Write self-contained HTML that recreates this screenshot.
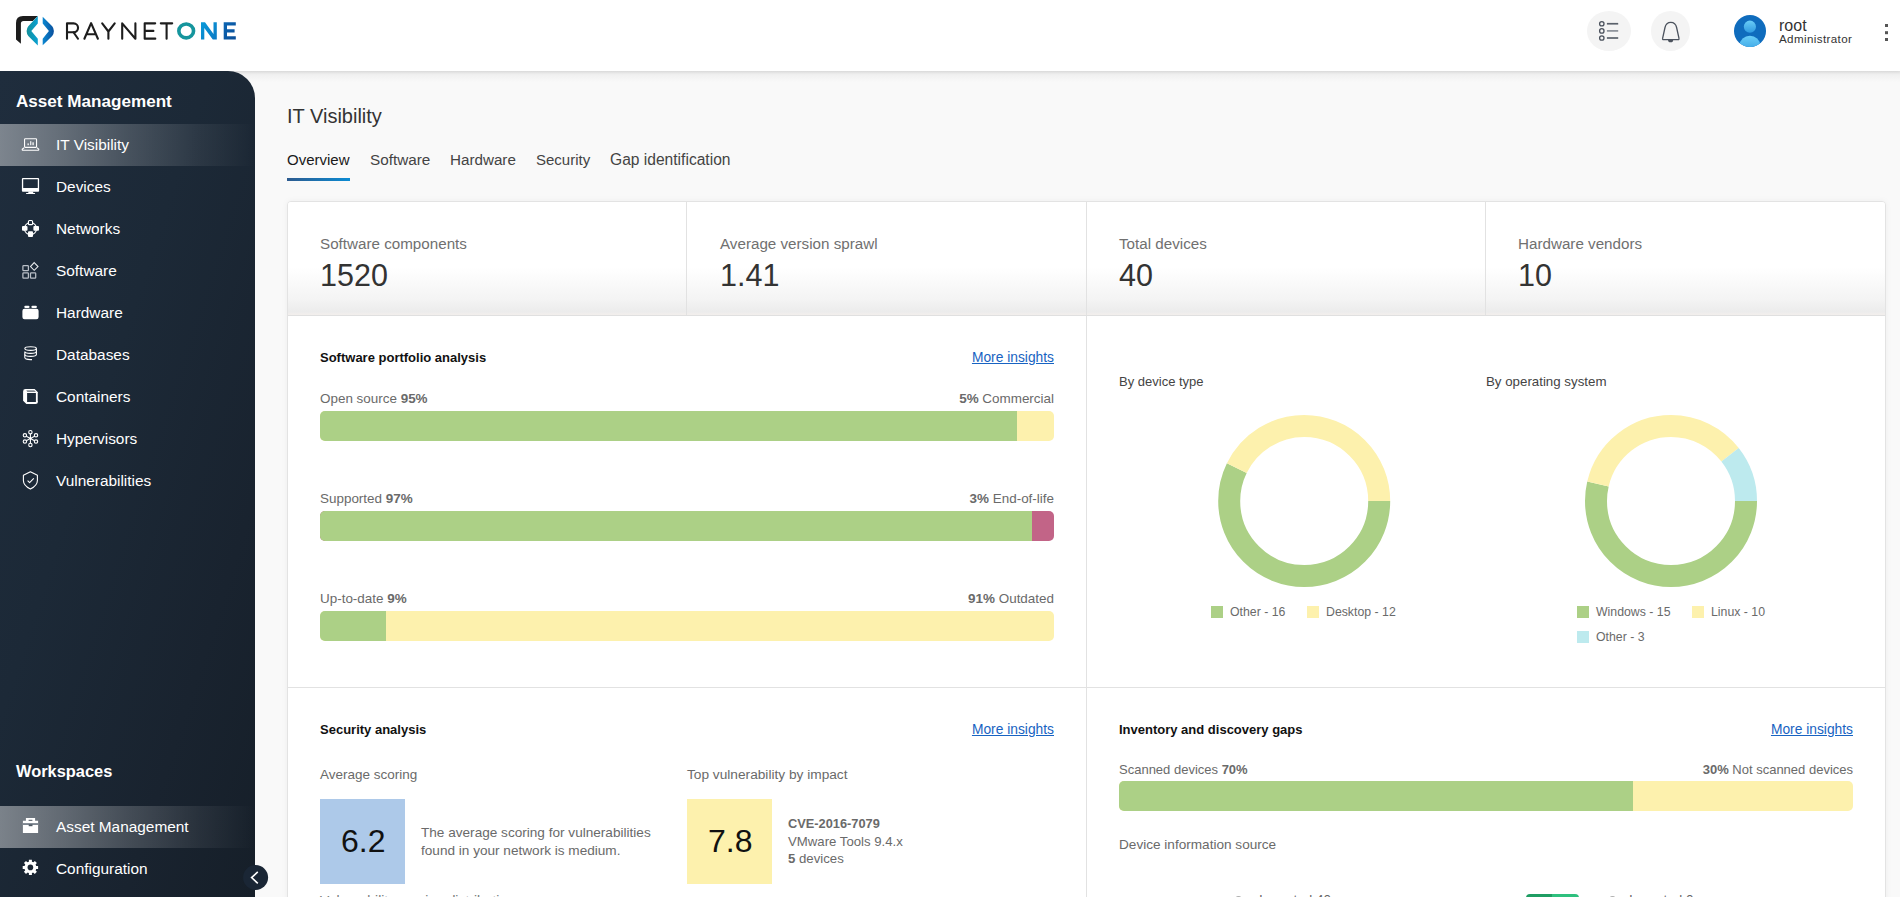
<!DOCTYPE html><html><head><meta charset="utf-8"><style>
*{box-sizing:border-box;margin:0;padding:0}
html,body{width:1900px;height:897px;overflow:hidden;background:#f9f9f9;font-family:"Liberation Sans",sans-serif;color:#333}
.a{position:absolute;white-space:nowrap}
b{font-weight:700}
</style></head><body><div class="a" style="left:0px;top:71px;width:1900px;height:11px;background:linear-gradient(#e4e4e4,#f0f0f0 35%,#f9f9f9)"></div>
<div class="a" style="left:287px;top:201px;width:1599px;height:720px;background:#fff;border:1px solid #e3e3e3;border-radius:4px;box-shadow:0 0 6px rgba(0,0,0,.05)"></div>
<div class="a" style="left:288px;top:202px;width:1597px;height:113px;background:linear-gradient(#fff 0%,#fff 58%,#f4f4f4 86%,#ececec 97%,#f3efed 100%);border-radius:3px 3px 0 0"></div>
<div class="a" style="left:288px;top:315px;width:1597px;height:1px;background:#e0e0e0"></div>
<div class="a" style="left:686px;top:202px;width:1px;height:113px;background:#e2e2e2"></div>
<div class="a" style="left:1086px;top:202px;width:1px;height:113px;background:#e2e2e2"></div>
<div class="a" style="left:1485px;top:202px;width:1px;height:113px;background:#e2e2e2"></div>
<div class="a" style="left:1086px;top:316px;width:1px;height:600px;background:#e2e2e2"></div>
<div class="a" style="left:288px;top:687px;width:1597px;height:1px;background:#e2e2e2"></div>
<div class="a " style="left:320px;top:236.13px;font-size:15.2px;line-height:15.2px;font-weight:400;color:#707070;">Software components</div>
<div class="a " style="left:320px;top:260.18px;font-size:30.5px;line-height:30.5px;font-weight:400;color:#333;">1520</div>
<div class="a " style="left:720px;top:236.13px;font-size:15.2px;line-height:15.2px;font-weight:400;color:#707070;">Average version sprawl</div>
<div class="a " style="left:720px;top:260.18px;font-size:30.5px;line-height:30.5px;font-weight:400;color:#333;">1.41</div>
<div class="a " style="left:1119px;top:236.13px;font-size:15.2px;line-height:15.2px;font-weight:400;color:#707070;">Total devices</div>
<div class="a " style="left:1119px;top:260.18px;font-size:30.5px;line-height:30.5px;font-weight:400;color:#333;">40</div>
<div class="a " style="left:1518px;top:236.13px;font-size:15.2px;line-height:15.2px;font-weight:400;color:#707070;">Hardware vendors</div>
<div class="a " style="left:1518px;top:260.18px;font-size:30.5px;line-height:30.5px;font-weight:400;color:#333;">10</div>
<div class="a " style="left:320px;top:350.70px;font-size:13px;line-height:13px;font-weight:700;color:#111;">Software portfolio analysis</div>
<div class="a" style="right:846px;top:350.92px;font-size:13.8px;line-height:13.8px;font-weight:400;color:#1863c2;text-align:right;text-decoration:underline">More insights</div>
<div class="a " style="left:320px;top:392.01px;font-size:13.45px;line-height:13.45px;font-weight:400;color:#6a6a6a;">Open source <b>95%</b></div>
<div class="a" style="right:846px;top:392.01px;font-size:13.45px;line-height:13.45px;font-weight:400;color:#6a6a6a;text-align:right;"><b>5%</b> Commercial</div>
<div class="a" style="left:320px;top:411px;width:734px;height:30px;background:#fdf1ad;border-radius:5px;overflow:hidden"></div>
<div class="a" style="left:320px;top:411px;width:697px;height:30px;background:#acd086;border-radius:5px 0 0 5px"></div>
<div class="a " style="left:320px;top:492.01px;font-size:13.45px;line-height:13.45px;font-weight:400;color:#6a6a6a;">Supported <b>97%</b></div>
<div class="a" style="right:846px;top:492.01px;font-size:13.45px;line-height:13.45px;font-weight:400;color:#6a6a6a;text-align:right;"><b>3%</b> End-of-life</div>
<div class="a" style="left:320px;top:511px;width:734px;height:30px;background:#c26487;border-radius:5px;overflow:hidden"></div>
<div class="a" style="left:320px;top:511px;width:712px;height:30px;background:#acd086;border-radius:5px 0 0 5px"></div>
<div class="a " style="left:320px;top:592.01px;font-size:13.45px;line-height:13.45px;font-weight:400;color:#6a6a6a;">Up-to-date <b>9%</b></div>
<div class="a" style="right:846px;top:592.01px;font-size:13.45px;line-height:13.45px;font-weight:400;color:#6a6a6a;text-align:right;"><b>91%</b> Outdated</div>
<div class="a" style="left:320px;top:611px;width:734px;height:30px;background:#fdf1ad;border-radius:5px;overflow:hidden"></div>
<div class="a" style="left:320px;top:611px;width:66px;height:30px;background:#acd086;border-radius:5px 0 0 5px"></div>
<div class="a " style="left:1119px;top:374.60px;font-size:13px;line-height:13px;font-weight:400;color:#444;">By device type</div>
<div class="a " style="left:1486px;top:375.14px;font-size:13.3px;line-height:13.3px;font-weight:400;color:#444;">By operating system</div>
<svg class="a" style="left:0;top:0" width="1900" height="897"><circle cx="1304.2" cy="501" r="75" fill="none" stroke="#acd086" stroke-width="22" stroke-dasharray="269.279 471.239" stroke-dashoffset="0.000"/><circle cx="1304.2" cy="501" r="75" fill="none" stroke="#fdf1ad" stroke-width="22" stroke-dasharray="201.960 471.239" stroke-dashoffset="-269.279"/><circle cx="1671" cy="501" r="75" fill="none" stroke="#acd086" stroke-width="22" stroke-dasharray="252.449 471.239" stroke-dashoffset="0.000"/><circle cx="1671" cy="501" r="75" fill="none" stroke="#fdf1ad" stroke-width="22" stroke-dasharray="168.300 471.239" stroke-dashoffset="-252.449"/><circle cx="1671" cy="501" r="75" fill="none" stroke="#bdeaee" stroke-width="22" stroke-dasharray="50.490 471.239" stroke-dashoffset="-420.749"/></svg>
<div class="a" style="left:1211px;top:606px;width:12px;height:12px;background:#acd086"></div>
<div class="a " style="left:1230px;top:606.19px;font-size:12.3px;line-height:12.3px;font-weight:400;color:#6a6a6a;">Other - 16</div>
<div class="a" style="left:1307px;top:606px;width:12px;height:12px;background:#fdf1ad"></div>
<div class="a " style="left:1326px;top:606.19px;font-size:12.3px;line-height:12.3px;font-weight:400;color:#6a6a6a;">Desktop - 12</div>
<div class="a" style="left:1577px;top:606px;width:12px;height:12px;background:#acd086"></div>
<div class="a " style="left:1596px;top:606.19px;font-size:12.3px;line-height:12.3px;font-weight:400;color:#6a6a6a;">Windows - 15</div>
<div class="a" style="left:1692px;top:606px;width:12px;height:12px;background:#fdf1ad"></div>
<div class="a " style="left:1711px;top:606.19px;font-size:12.3px;line-height:12.3px;font-weight:400;color:#6a6a6a;">Linux - 10</div>
<div class="a" style="left:1577px;top:631px;width:12px;height:12px;background:#bdeaee"></div>
<div class="a " style="left:1596px;top:631.19px;font-size:12.3px;line-height:12.3px;font-weight:400;color:#6a6a6a;">Other - 3</div>
<div class="a " style="left:320px;top:723.00px;font-size:13px;line-height:13px;font-weight:700;color:#111;">Security analysis</div>
<div class="a" style="right:846px;top:723.22px;font-size:13.8px;line-height:13.8px;font-weight:400;color:#1863c2;text-align:right;text-decoration:underline">More insights</div>
<div class="a " style="left:320px;top:767.77px;font-size:13.5px;line-height:13.5px;font-weight:400;color:#6a6a6a;">Average scoring</div>
<div class="a" style="left:320px;top:799px;width:85px;height:85px;background:#adc9e9"></div>
<div class="a " style="left:341px;top:824.91px;font-size:32px;line-height:32px;font-weight:400;color:#111;">6.2</div>
<div class="a " style="left:421px;top:826.09px;font-size:13.6px;line-height:13.6px;font-weight:400;color:#6a6a6a;">The average scoring for vulnerabilities</div>
<div class="a " style="left:421px;top:843.69px;font-size:13.6px;line-height:13.6px;font-weight:400;color:#6a6a6a;">found in your network is medium.</div>
<div class="a " style="left:687px;top:767.50px;font-size:13.7px;line-height:13.7px;font-weight:400;color:#6a6a6a;">Top vulnerability by impact</div>
<div class="a" style="left:687px;top:799px;width:85px;height:85px;background:#fdf1ad"></div>
<div class="a " style="left:708px;top:824.51px;font-size:32px;line-height:32px;font-weight:400;color:#111;">7.8</div>
<div class="a " style="left:788px;top:817.86px;font-size:12.8px;line-height:12.8px;font-weight:700;color:#6a6a6a;">CVE-2016-7079</div>
<div class="a " style="left:788px;top:834.73px;font-size:13.2px;line-height:13.2px;font-weight:400;color:#6a6a6a;">VMware Tools 9.4.x</div>
<div class="a " style="left:788px;top:851.53px;font-size:13.2px;line-height:13.2px;font-weight:400;color:#6a6a6a;"><b>5</b> devices</div>
<div class="a " style="left:320px;top:894.83px;font-size:13.9px;line-height:13.9px;font-weight:400;color:#777;">Vulnerability scoring distribution</div>
<div class="a " style="left:687px;top:895.09px;font-size:13.6px;line-height:13.6px;font-weight:400;color:#777;">Severity by CVSS score  CVSS 3.1</div>
<div class="a " style="left:1119px;top:723.00px;font-size:13px;line-height:13px;font-weight:700;color:#111;">Inventory and discovery gaps</div>
<div class="a" style="right:47px;top:723.22px;font-size:13.8px;line-height:13.8px;font-weight:400;color:#1863c2;text-align:right;text-decoration:underline">More insights</div>
<div class="a " style="left:1119px;top:762.50px;font-size:13px;line-height:13px;font-weight:400;color:#6a6a6a;">Scanned devices <b>70%</b></div>
<div class="a" style="right:47px;top:762.50px;font-size:13px;line-height:13px;font-weight:400;color:#6a6a6a;text-align:right;"><b>30%</b> Not scanned devices</div>
<div class="a" style="left:1119px;top:781px;width:734px;height:30px;background:#fdf1ad;border-radius:5px;overflow:hidden"></div>
<div class="a" style="left:1119px;top:781px;width:514px;height:30px;background:#acd086;border-radius:5px 0 0 5px"></div>
<div class="a " style="left:1119px;top:838.19px;font-size:13.6px;line-height:13.6px;font-weight:400;color:#6a6a6a;">Device information source</div>
<div class="a" style="left:1234px;top:896px;width:9px;height:9px;border-radius:50%;border:1.5px solid #999"></div>
<div class="a " style="left:1259px;top:893.37px;font-size:13.5px;line-height:13.5px;font-weight:400;color:#666;">Imported 40</div>
<div class="a" style="left:1526px;top:894px;width:53px;height:10px;border-radius:4px;background:linear-gradient(90deg,#1f9d63 0,#1f9d63 50%,#2ec07e 50%)"></div>
<div class="a" style="left:1608px;top:896px;width:9px;height:9px;border-radius:50%;border:1.5px solid #999"></div>
<div class="a " style="left:1629px;top:893.37px;font-size:13.5px;line-height:13.5px;font-weight:400;color:#666;">Imported 0</div>
<div class="a " style="left:287px;top:106.17px;font-size:20px;line-height:20px;font-weight:400;color:#333;">IT Visibility</div>
<div class="a " style="left:287px;top:152.00px;font-size:15px;line-height:15px;font-weight:400;color:#1a1a1a;">Overview</div>
<div class="a " style="left:370px;top:151.75px;font-size:15.3px;line-height:15.3px;font-weight:400;color:#444;">Software</div>
<div class="a " style="left:450px;top:151.83px;font-size:15.2px;line-height:15.2px;font-weight:400;color:#444;">Hardware</div>
<div class="a " style="left:536px;top:152.00px;font-size:15px;line-height:15px;font-weight:400;color:#444;">Security</div>
<div class="a " style="left:610px;top:152.29px;font-size:15.6px;line-height:15.6px;font-weight:400;color:#444;">Gap identification</div>
<div class="a" style="left:287px;top:178px;width:63px;height:3px;background:linear-gradient(90deg,#2d5b8f,#0b8bd3)"></div>
<div class="a" style="left:0px;top:0px;width:1900px;height:71px;background:#fff;box-shadow:0 1px 3px rgba(0,0,0,.06)"></div>
<svg class="a" style="left:0;top:0" width="260" height="60" viewBox="0 0 260 60">
<defs>
<linearGradient id="gt" x1="0" y1="0" x2="1" y2="0"><stop offset="0" stop-color="#13909a"/><stop offset="1" stop-color="#0aa0d2"/></linearGradient>
<linearGradient id="gb" x1="0" y1="0" x2="1" y2="0"><stop offset="0" stop-color="#0a88d2"/><stop offset="1" stop-color="#0a4f9c"/></linearGradient>
<linearGradient id="gn" x1="0" y1="0" x2="1" y2="1"><stop offset="0" stop-color="#0a9ad9"/><stop offset="1" stop-color="#0b79c4"/></linearGradient>
<linearGradient id="ge" x1="0" y1="0" x2="1" y2="1"><stop offset="0" stop-color="#0b63b0"/><stop offset="1" stop-color="#0a4e98"/></linearGradient>
</defs>
<path d="M16 39.5 L16 23 Q16 16 23 16 L37.8 16 L32.8 20.9 L23.5 20.9 Q20.9 20.9 20.9 23.5 L20.9 43.8 Z" fill="#1d1d1d"/>
<path d="M37.8 16 L37.8 23.4 L31.3 31.1 L37.8 38.7 L37.8 45.5 L28.3 36 Q26.6 33.6 26.6 31 Q26.6 28.4 28.3 26.3 Z" fill="url(#gt)"/>
<path d="M42.7 16.7 L52.2 26.3 Q53.9 28.4 53.9 31 Q53.9 33.6 52.2 36 L42.7 45.3 L42.7 38.7 L48.9 31.1 L42.7 23.4 Z" fill="url(#gb)"/>
<g fill="none" stroke="#1d1d1d" stroke-width="2.1" stroke-linejoin="round" stroke-linecap="round">
<path d="M67 38.75 V23.35 H73.6 A4.45 4.45 0 0 1 73.6 32.25 H67"/>
<path d="M73.5 32.25 L78 38.75"/>
<path d="M84.4 38.75 L91.1 23.2 L97.9 38.75 M86.8 34.2 H95.4"/>
<path d="M102.2 23.35 L108.4 31.5 L114.7 23.35 M108.4 31.5 V38.75"/>
<path d="M122.2 38.75 V23.35 L135.4 38.75 V23.35"/>
<path d="M155.2 23.35 H144.7 V38.65 H155.3 M144.7 30.9 H153.4"/>
<path d="M160.8 23.35 H172.2 M166.6 23.35 V38.75"/>
</g>
<ellipse cx="186.2" cy="30.9" rx="7.35" ry="6.95" fill="none" stroke="#15959d" stroke-width="3.6"/>
<path d="M201 39.6 V22.2 H205 L213.5 33.9 V22.2 H216.8 V39.6 H212.8 L204.3 27.9 V39.6 Z" fill="url(#gn)"/>
<path d="M235.8 23.85 H225.35 V37.95 H235.8 M225.35 30.9 H234.6" fill="none" stroke="url(#ge)" stroke-width="3.3"/>
</svg>
<div class="a" style="left:1587px;top:11px;width:44px;height:40px;border-radius:50%;background:#f4f4f4"></div>
<div class="a" style="left:1651px;top:11px;width:39px;height:40px;border-radius:50%;background:#f4f4f4"></div>
<svg class="a" style="left:1580px;top:0" width="320" height="60" viewBox="1580 0 320 60">
<g fill="none" stroke="#4b525d" stroke-width="1.3">
<circle cx="1601.8" cy="23.75" r="2.2"/><circle cx="1601.8" cy="30.9" r="2.2"/><circle cx="1601.8" cy="38" r="2.2"/>
</g>
<g stroke-width="1.7">
<path d="M1606.9 23.75 H1618.2" stroke="#5a616b"/>
<path d="M1606.9 30.9 H1618.2" stroke="#8b9098"/>
<path d="M1606.9 38 H1618.2" stroke="#5a616b"/>
</g>
<path d="M1662.6 38.4 Q1662.3 39.6 1663.6 39.6 H1678 Q1679.3 39.6 1679 38.4 L1676.6 27.5 Q1675.5 22.4 1670.8 22.4 Q1666.1 22.4 1665 27.5 Z" fill="none" stroke="#4b525d" stroke-width="1.3"/>
<path d="M1668 39.9 A2.6 2.4 0 0 0 1673.2 39.9 Z" fill="#4b525d"/>
<defs>
<linearGradient id="av" x1="0" y1="0" x2="0" y2="1"><stop offset="0" stop-color="#69cdf7"/><stop offset="1" stop-color="#2f9ae0"/></linearGradient>
<clipPath id="avc"><circle cx="1750" cy="31" r="16"/></clipPath>
</defs>
<circle cx="1750" cy="31" r="16" fill="#0f6cbd"/>
<g clip-path="url(#avc)">
<circle cx="1749.9" cy="26.7" r="6.1" fill="url(#av)"/>
<ellipse cx="1749.9" cy="45" rx="10.2" ry="9.3" fill="url(#av)"/>
</g>
<g fill="#555"><rect x="1885" y="24" width="3" height="3"/><rect x="1885" y="31.2" width="3" height="3"/><rect x="1885" y="38" width="3" height="3"/></g>
</svg>
<div class="a " style="left:1779px;top:17.76px;font-size:16px;line-height:16px;font-weight:400;color:#333;">root</div>
<div class="a " style="left:1779px;top:32.78px;font-size:11.6px;line-height:11.6px;font-weight:400;color:#333;letter-spacing:0.38px">Administrator</div>
<div class="a" style="left:0;top:71px;width:255px;height:826px;border-top-right-radius:27px;background:linear-gradient(108deg,#1f2d3d 0%,#1c2937 40%,#19232f 75%,#161f29 100%);overflow:hidden">
<div class="a " style="left:16px;top:21.52px;font-size:17.1px;line-height:17.1px;font-weight:700;color:#fff;">Asset Management</div>
<div class="a" style="left:0px;top:53px;width:255px;height:42px;background:linear-gradient(90deg,rgba(255,255,255,.42) 0%,rgba(255,255,255,.31) 25%,rgba(255,255,255,.19) 50%,rgba(255,255,255,.07) 78%,rgba(255,255,255,0) 100%)"></div>
<div class="a " style="left:56px;top:65.86px;font-size:15.4px;line-height:15.4px;font-weight:400;color:#fff;">IT Visibility</div>
<div class="a " style="left:56px;top:107.86px;font-size:15.4px;line-height:15.4px;font-weight:400;color:#fff;">Devices</div>
<div class="a " style="left:56px;top:149.86px;font-size:15.4px;line-height:15.4px;font-weight:400;color:#fff;">Networks</div>
<div class="a " style="left:56px;top:191.86px;font-size:15.4px;line-height:15.4px;font-weight:400;color:#fff;">Software</div>
<div class="a " style="left:56px;top:233.86px;font-size:15.4px;line-height:15.4px;font-weight:400;color:#fff;">Hardware</div>
<div class="a " style="left:56px;top:275.86px;font-size:15.4px;line-height:15.4px;font-weight:400;color:#fff;">Databases</div>
<div class="a " style="left:56px;top:317.86px;font-size:15.4px;line-height:15.4px;font-weight:400;color:#fff;">Containers</div>
<div class="a " style="left:56px;top:359.86px;font-size:15.4px;line-height:15.4px;font-weight:400;color:#fff;">Hypervisors</div>
<div class="a " style="left:56px;top:401.86px;font-size:15.4px;line-height:15.4px;font-weight:400;color:#fff;">Vulnerabilities</div>
<div class="a " style="left:16px;top:692.12px;font-size:16.4px;line-height:16.4px;font-weight:700;color:#fff;">Workspaces</div>
<div class="a" style="left:0px;top:735px;width:255px;height:42px;background:linear-gradient(90deg,rgba(255,255,255,.42) 0%,rgba(255,255,255,.31) 25%,rgba(255,255,255,.19) 50%,rgba(255,255,255,.07) 78%,rgba(255,255,255,0) 100%)"></div>
<div class="a " style="left:56px;top:747.86px;font-size:15.4px;line-height:15.4px;font-weight:400;color:#fff;">Asset Management</div>
<div class="a " style="left:56px;top:789.86px;font-size:15.4px;line-height:15.4px;font-weight:400;color:#fff;">Configuration</div>
</div>
<svg class="a" style="left:0;top:0" width="280" height="897" viewBox="0 0 280 897">
<g fill="none" stroke="#fff" stroke-width="1.1">
<!-- laptop -->
<rect x="24.55" y="138.75" width="12" height="8.6" rx="0.8"/>
<path d="M24.3 147.6 L22.3 149.2 Q21.9 150.3 23 150.3 H38 Q39.1 150.3 38.7 149.2 L36.8 147.6"/>
</g>
<g fill="#fff">
<rect x="27.4" y="143.4" width="1.6" height="1.8" opacity=".8"/><rect x="30.2" y="141.2" width="1.1" height="4"/><rect x="32.3" y="142.3" width="1.6" height="2.9" opacity=".8"/>
<!-- monitor -->
<path fill-rule="evenodd" d="M22.9 177.9 H38.1 Q39.1 177.9 39.1 178.9 V190.8 Q39.1 191.8 38.1 191.8 H22.9 Q21.9 191.8 21.9 190.8 V178.9 Q21.9 177.9 22.9 177.9 Z M23.2 179.2 V188 H37.8 V179.2 Z"/>
<rect x="28.3" y="191.5" width="4.9" height="1.6"/><rect x="26" y="193" width="9.1" height="1.1" rx=".5"/>
<!-- networks -->
</g>
<circle cx="30.5" cy="228.6" r="6.1" fill="none" stroke="#fff" stroke-width="1.1"/>
<rect x="28.45" y="220.55" width="4.1" height="4.1" rx="1" fill="#1c2a39" stroke="#fff" stroke-width="1.1"/>
<g fill="#fff"><rect x="22" y="225.9" width="5.5" height="4.9" rx="1"/><rect x="33.4" y="225.9" width="5.6" height="4.9" rx="1"/><rect x="28" y="231.2" width="5" height="5.7" rx="1"/></g>
<!-- software -->
<g fill="none" stroke="#b9bfc7" stroke-width="1.25">
<rect x="22.9" y="265.7" width="5.5" height="4.9" rx=".7"/>
<rect x="22.9" y="272.8" width="5.5" height="5.3" rx=".7"/>
<rect x="30.5" y="272.8" width="5.2" height="5.3" rx=".7"/>
</g>
<path d="M34.2 262.6 L38 266.6 L34.2 270.3 L30.5 266.6 Z" fill="none" stroke="#e6e9ec" stroke-width="1.1"/>
<!-- hardware -->
<g fill="#fff">
<rect x="22.4" y="308.8" width="16.2" height="10.5" rx="2.2"/>
<rect x="24.3" y="305.7" width="5.2" height="2.4" rx="1.1"/><rect x="31.4" y="305.7" width="5.5" height="2.4" rx="1.1"/>
</g>
<!-- database -->
<g fill="none" stroke="#fff" stroke-width="1.1">
<ellipse cx="30.6" cy="348.6" rx="5.8" ry="1.8"/>
<path d="M36.4 348.6 V354.6 Q36.4 356.4 30.6 356.4 Q24.8 356.4 24.8 354.6"/>
<path d="M36.4 351.6 Q36.4 353.4 30.6 353.4 Q24.8 353.4 24.8 351.6 V357.6 Q24.8 359.6 30.6 359.6 H32"/>
</g>
<!-- containers -->
<path fill="#fff" fill-rule="evenodd" d="M25.5 389 H34.6 L37.9 392.3 V401.5 Q37.9 404 35.4 404 H26.4 L23.1 400.7 V391.4 Q23.1 389 25.5 389 Z M27.1 393.1 V401.9 H35.9 V393.1 Z"/>
<path d="M26.3 390.3 H34.3 L35.8 391.9 H27.3 Z" fill="#1d2a39" opacity=".55"/>
<path d="M37.9 393 V401" stroke="#1d2a39" stroke-width=".6" opacity=".5"/>
<!-- hypervisors -->
<g fill="none" stroke="#fff" stroke-width="1.1">
<path d="M30.4 438.4 V433.8 M30.4 438.4 V443.5 M30.4 438.4 L26.3 436.2 M30.4 438.4 L34.6 436.2 M30.4 438.4 L26.3 440.8 M30.4 438.4 L34.6 440.8"/>
<circle cx="30.4" cy="432.2" r="1.7"/><circle cx="30.4" cy="445" r="1.7"/>
<circle cx="24.9" cy="435.3" r="1.7"/><circle cx="36" cy="435.3" r="1.7"/>
<circle cx="24.9" cy="441.6" r="1.7"/><circle cx="36" cy="441.6" r="1.7"/>
</g>
<!-- shield -->
<g fill="none" stroke="#fff" stroke-width="1.1" stroke-linejoin="round">
<path d="M30.4 471.7 L37.4 475.3 V480.5 Q37.4 485.5 30.4 489.1 Q23.4 485.5 23.4 480.5 V475.3 Z"/>
<path d="M27.6 480.6 L29.6 482.6 L33.8 478.4"/>
</g>
<!-- briefcase -->
<g fill="#fff">
<path fill-rule="evenodd" d="M25.9 817.9 H35.1 V820.8 H38.1 V833.1 H22.9 V820.8 H25.9 Z M28.6 819.8 V821 H32.4 V819.8 Z"/>
</g>
<rect x="22.9" y="823.1" width="15.2" height="1.9" fill="#7d8690"/>
<rect x="28.7" y="824.4" width="3.8" height="1.8" fill="#4f5964"/>
<!-- gear -->
<g fill="#fff">
<path fill-rule="evenodd" d="M30.4 861.4 A6 6 0 1 1 30.39 861.4 Z M30.4 864.6 A2.8 2.8 0 1 0 30.41 864.6 Z"/>
</g>
<g stroke="#fff" stroke-width="3" >
<path d="M30.4 859.7 V875.1 M22.7 867.4 H38.1 M24.95 861.95 L35.85 872.85 M35.85 861.95 L24.95 872.85"/>
</g>
<circle cx="30.4" cy="867.4" r="2.8" fill="#1b2633"/>
<!-- collapse -->
<circle cx="255.6" cy="877.5" r="12.5" fill="#1a2635"/>
<path d="M257.8 871.9 L251.6 877.6 L257.8 883.4" fill="none" stroke="#fff" stroke-width="1.6"/>
</svg></body></html>
